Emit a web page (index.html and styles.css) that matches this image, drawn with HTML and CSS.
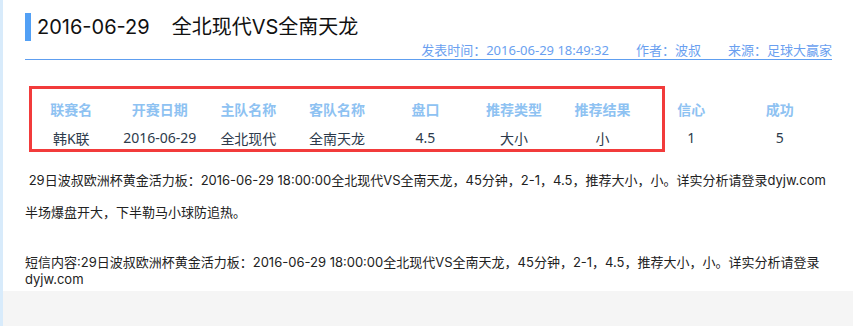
FILE: index.html
```html
<!DOCTYPE html>
<html lang="zh-CN">
<head>
<meta charset="utf-8">
<title>2016-06-29 全北现代VS全南天龙</title>
<link rel="stylesheet" href="styles.css">
</head>
<body>
<div class="page">
  <div class="strip"></div>
  <div class="content">
    <div class="main">
      <h1 class="title"><span>2016-06-29</span><span class="match">全北现代VS全南天龙</span></h1>
      <div class="meta">
        <span>发表时间：2016-06-29 18:49:32</span>
        <span>作者：波叔</span>
        <span>来源：足球大赢家</span>
      </div>
      <div class="table-wrap">
        <div class="grid">
          <div class="th">联赛名</div>
          <div class="th">开赛日期</div>
          <div class="th">主队名称</div>
          <div class="th">客队名称</div>
          <div class="th">盘口</div>
          <div class="th">推荐类型</div>
          <div class="th">推荐结果</div>
          <div class="th">信心</div>
          <div class="th">成功</div>
          <div class="td">韩K联</div>
          <div class="td">2016-06-29</div>
          <div class="td">全北现代</div>
          <div class="td">全南天龙</div>
          <div class="td">4.5</div>
          <div class="td">大小</div>
          <div class="td">小</div>
          <div class="td">1</div>
          <div class="td">5</div>
        </div>
        <div class="highlight"></div>
      </div>
      <p class="p1">&nbsp;29日波叔欧洲杯黄金活力板：2016-06-29 18:00:00全北现代VS全南天龙，45分钟，2-1，4.5，推荐大小，小。详实分析请登录dyjw.com</p>
      <p class="p2">半场爆盘开大，下半勒马小球防追热。</p>
      <p class="p3">短信内容:29日波叔欧洲杯黄金活力板：2016-06-29 18:00:00全北现代VS全南天龙，45分钟，2-1，4.5，推荐大小，小。详实分析请登录dyjw.com</p>
    </div>
  </div>
</div>
</body>
</html>
```
FILE: styles.css
```css
html, body {
  margin: 0;
  padding: 0;
  background: #f5f5f5;
}
body {
  font-family: "Noto Sans", "Noto Sans CJK SC", sans-serif;
  color: #222;
}
.page {
  display: flex;
  min-height: 326px;
}
.strip {
  width: 3px;
  background: #d8ebfb;
  flex: none;
}
.content {
  flex: 1;
}
.main {
  background: #fff;
  padding: 0 21px 3px 22px;
  display: flex;
  flex-direction: column;
}
.title {
  margin: 13px 0 0;
  height: 28px;
  border-left: 6px solid #52a0f5;
  padding-left: 6px;
  font-family: "Inter", "Noto Sans CJK SC", sans-serif;
  font-size: 20px;
  line-height: 28px;
  font-weight: normal;
  color: #111;
}
.title .match {
  margin-left: 22px;
}
.meta {
  height: 18px;
  line-height: 18px;
  border-bottom: 1px solid #5e9ef0;
  display: flex;
  justify-content: flex-end;
  gap: 27px;
  font-size: 13px;
  color: #6a9ff0;
}
.table-wrap {
  position: relative;
  margin: 26px 0 0 2px;
  padding-top: 8px;
  width: 797px;
}
.grid {
  display: grid;
  grid-template-columns: repeat(9, 1fr);
  grid-auto-rows: 29px;
  align-items: center;
  text-align: center;
  font-size: 14px;
}
.th {
  font-weight: bold;
  color: #8ec2f2;
}
.td {
  color: #2d3a4b;
}
.highlight {
  position: absolute;
  left: 2px;
  top: 0;
  width: 630px;
  height: 60px;
  border: 3px solid #f23b3b;
}
.main p {
  margin: 0;
  font-family: "Inter", "Noto Sans CJK SC", sans-serif;
  font-size: 13px;
  line-height: 17px;
}
.main .p1 {
  margin-top: 20px;
}
.main .p2 {
  margin-top: 15px;
}
.main .p3 {
  margin-top: 33px;
}
```
